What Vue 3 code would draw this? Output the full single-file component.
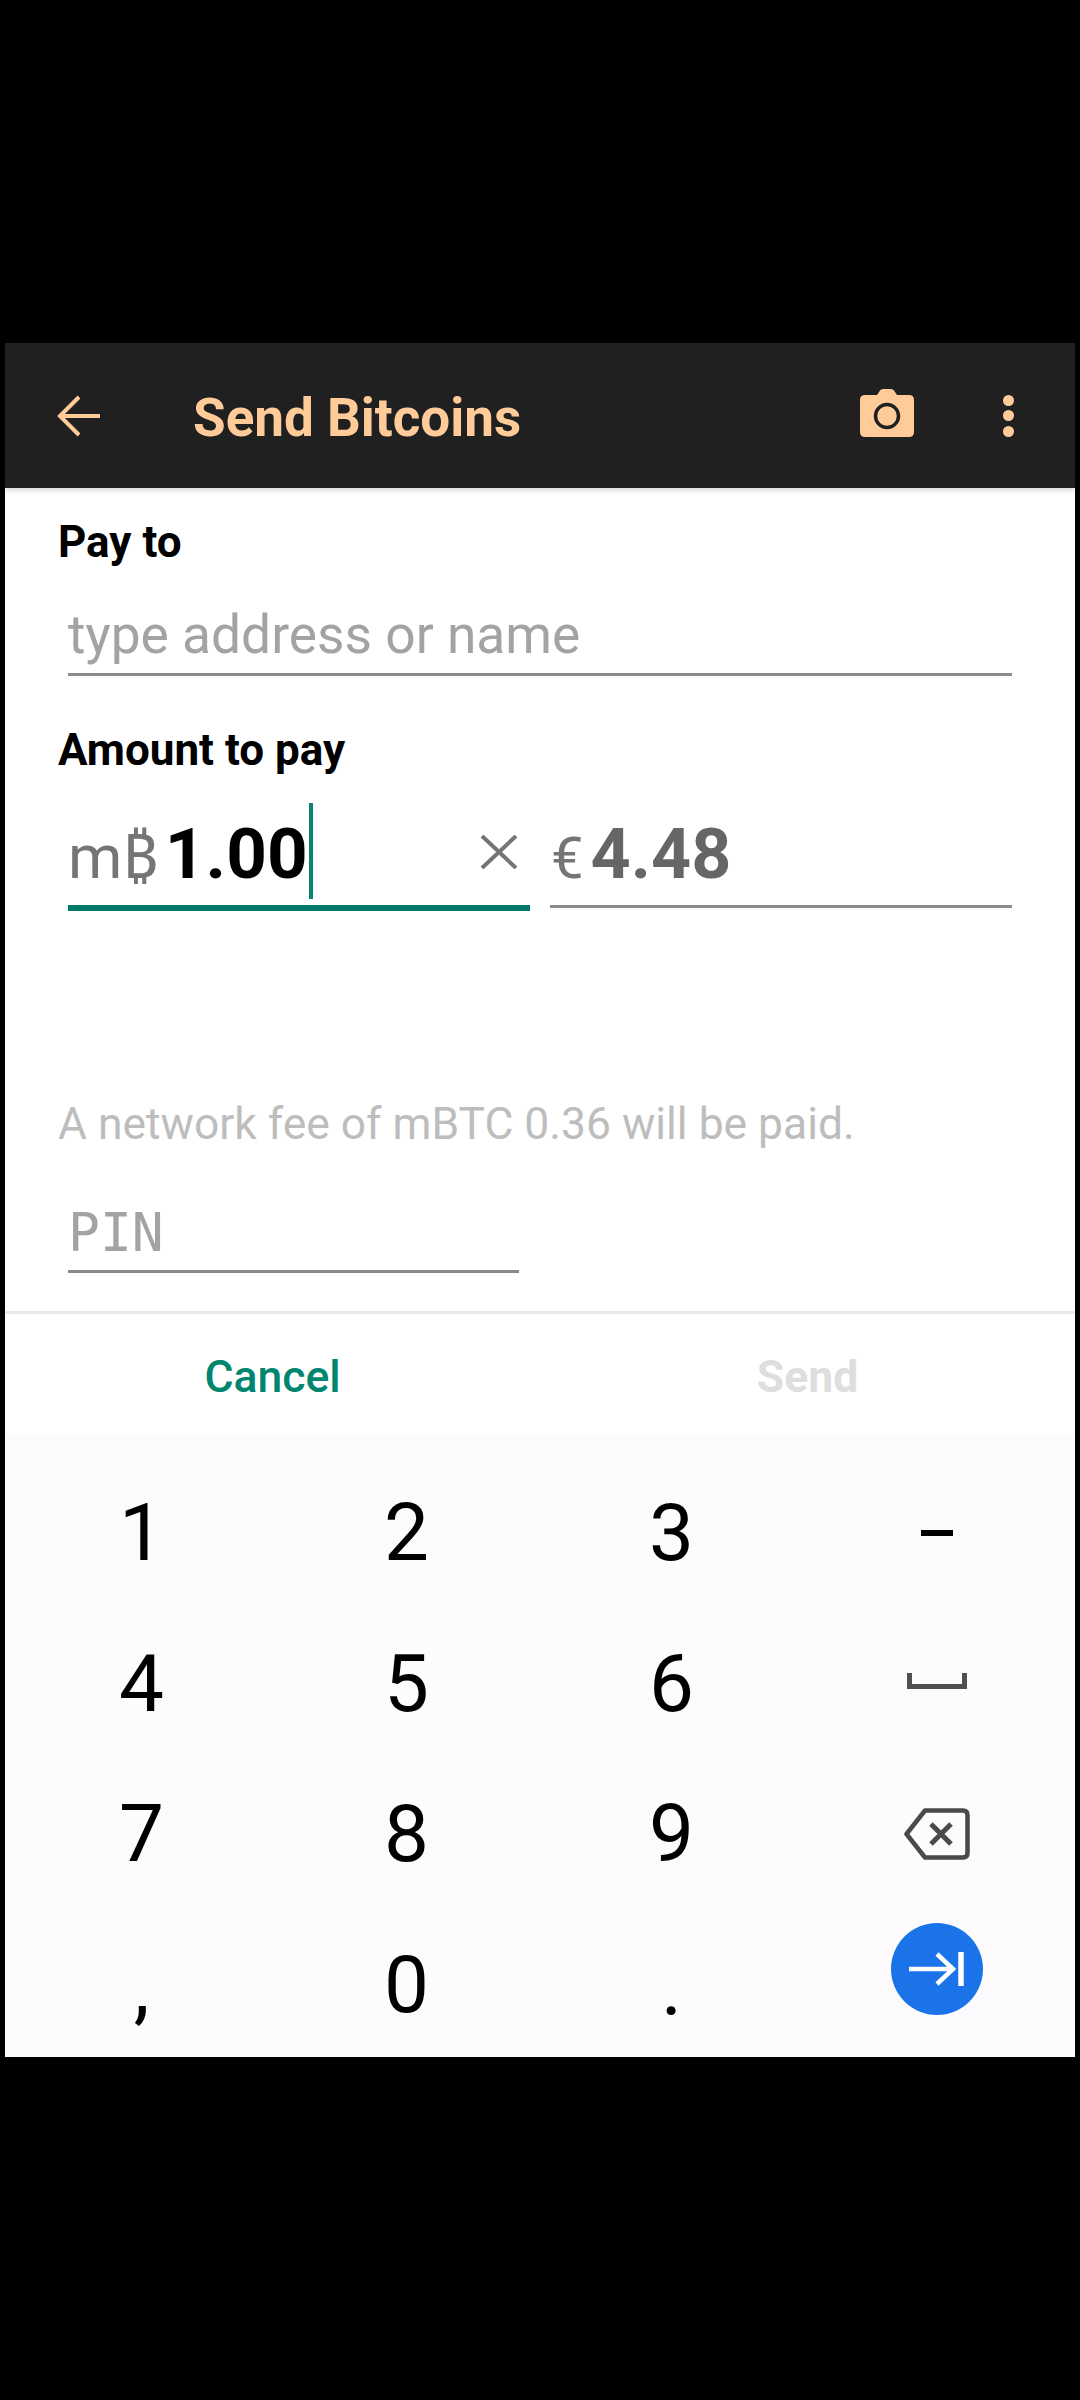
<script setup>
const rows = [
  ['1', '2', '3'],
  ['4', '5', '6'],
  ['7', '8', '9'],
  [',', '0', '.'],
]
</script>

<template>
  <main class="page">
    <section class="screen">
      <header class="bar">
        <svg class="back" viewBox="0 0 44 42" width="44" height="42" aria-label="Back">
          <path d="M43 21H3M22 2 3 21l19 19" fill="none" stroke="#ffcc99" stroke-width="4" />
        </svg>
        <h1 class="title">Send Bitcoins</h1>
        <svg class="camera" viewBox="0 0 54 48" width="54" height="48" aria-label="Scan">
          <path
            d="M17 6 20 1.500Q21 0 23 0H31Q33 0 34 1.500L37 6H49Q54 6 54 11V43Q54 48 49 48H5Q0 48 0 43V11Q0 6 5 6Z"
            fill="#ffcc99"
          />
          <circle cx="27" cy="27" r="11.500" fill="none" stroke="#202020" stroke-width="3.500" />
        </svg>
        <div class="dots" aria-label="More">
          <i></i><i></i><i></i>
        </div>
      </header>

      <div class="form">
        <div class="label">Pay to</div>
        <div class="field address">type address or name</div>

        <div class="label amount-label">Amount to pay</div>
        <div class="amounts">
          <div class="amount focused">
            <span class="unit">m₿</span><span class="value">1.00</span><span class="caret"></span>
            <svg class="clear" viewBox="0 0 38 34" width="38" height="34" aria-label="Clear">
              <path d="M2 1 36 33M36 1 2 33" stroke="#757575" stroke-width="4" fill="none" />
            </svg>
          </div>
          <div class="amount">
            <span class="unit euro">€</span><span class="value muted">4.48</span>
          </div>
        </div>

        <p class="fee">A network fee of mBTC 0.36 will be paid.</p>
        <div class="field pin">PIN</div>
      </div>

      <footer class="actions">
        <button class="action cancel" type="button">Cancel</button>
        <button class="action send" type="button">Send</button>
      </footer>

      <div class="keyboard">
        <template v-for="(row, r) in rows" :key="r">
          <div v-for="key in row" :key="key" class="key" :class="{ punct: key === ',' || key === '.' }">{{ key }}</div>
          <div v-if="r === 0" class="key side">
            <svg viewBox="0 0 32 6" width="32" height="6"><rect width="32" height="6" fill="#000" /></svg>
          </div>
          <div v-else-if="r === 1" class="key side">
            <svg class="space" viewBox="0 0 60 16" width="60" height="16">
              <path d="M2.500 0V13.500H57.500V0" fill="none" stroke="#505050" stroke-width="5" />
            </svg>
          </div>
          <div v-else-if="r === 2" class="key side">
            <svg viewBox="0 0 66 52" width="66" height="52">
              <path
                d="M21 2.500H59Q63.500 2.500 63.500 7V45Q63.500 49.500 59 49.500H21L2.500 26Z"
                fill="none"
                stroke="#4a4a4a"
                stroke-width="4.500"
                stroke-linejoin="round"
              />
              <path d="M27 16 47 36M47 16 27 36" stroke="#4a4a4a" stroke-width="5" fill="none" />
            </svg>
          </div>
          <div v-else class="key side">
            <div class="next">
              <svg viewBox="0 0 56 34" width="56" height="34">
                <path d="M0 17H44M28 2 44 17 28 32" fill="none" stroke="#fff" stroke-width="4.500" />
                <path d="M52 0V34" stroke="#fff" stroke-width="5.500" />
              </svg>
            </div>
          </div>
        </template>
      </div>
    </section>
  </main>
</template>

<style>
html,
body {
  margin: 0;
  background: #000;
}
</style>

<style scoped>
.page {
  width: 1080px;
  height: 2400px;
  padding: 343px 5px 0;
  box-sizing: border-box;
  background: #000;
  font-family: Roboto, "Noto Sans", sans-serif;
}

.screen {
  width: 1070px;
  height: 1714px;
  display: flex;
  flex-direction: column;
  background: #fff;
  overflow: hidden;
}

.bar {
  height: 145px;
  flex: none;
  display: flex;
  align-items: center;
  background: #202020;
  box-shadow: 0 2px 5px rgba(0, 0, 0, 0.18);
  position: relative;
}

.back {
  margin-left: 52px;
  flex: none;
}

.title {
  margin: 0 0 0 92px;
  flex: 1;
  color: #ffcc99;
  font-size: 53px;
  font-weight: 700;
  position: relative;
  top: 2px;
}

.camera {
  flex: none;
  margin: 0 89px 5px 0;
}

.dots {
  display: flex;
  flex-direction: column;
  gap: 4.500px;
  margin-right: 61px;
}

.dots i {
  width: 11px;
  height: 11px;
  border-radius: 50%;
  background: #ffcc99;
}

.form {
  flex: 1;
  padding: 31px 63px 0 53px;
  display: flex;
  flex-direction: column;
  align-items: flex-start;
}

.label {
  color: #000;
  font-size: 44px;
  font-weight: 700;
  line-height: 46px;
}

.field {
  box-sizing: border-box;
  margin-left: 10px;
  border-bottom: 3px solid #8a8a8a;
}

.address {
  width: 944px;
  margin-top: 32px;
  height: 79px;
  padding-top: 9px;
  color: #a3a3a3;
  font-size: 53.300px;
  line-height: 58px;
}

.amount-label {
  margin-top: 51px;
}

.amounts {
  margin: 30px 0 0 10px;
  width: 944px;
  display: flex;
  gap: 20px;
  align-items: flex-start;
}

.amount {
  flex: 1;
  height: 86px;
  position: relative;
  display: flex;
  align-items: baseline;
  padding-top: 16px;
  border-bottom: 3px solid #8a8a8a;
  color: #757575;
  line-height: 70px;
}

.amount.focused {
  border-bottom: 6px solid #00796b;
}

.unit {
  font-size: 62px;
}

.euro {
  margin-left: 1px;
  margin-right: 7px;
  font-size: 58px;
}

.value {
  margin-left: 7px;
  color: #000;
  font-size: 71px;
  font-weight: 700;
}

.muted {
  margin-left: 0;
  color: #666;
  font-size: 70px;
}

.caret {
  width: 4px;
  height: 96px;
  margin-left: 1px;
  align-self: flex-start;
  background: #0a8372;
  position: relative;
  top: -16px;
}

.clear {
  position: absolute;
  right: 12px;
  top: 32px;
}

.fee {
  margin: 188px 0 0;
  color: #bdbdbd;
  font-size: 44.400px;
  line-height: 50px;
}

.pin {
  width: 451px;
  height: 74px;
  margin-top: 50px;
  padding-top: 4px;
  color: #a3a3a3;
  font-family: "DejaVu Sans Mono", "Liberation Mono", monospace;
  font-size: 53px;
  line-height: 60px;
}

.actions {
  flex: none;
  height: 120px;
  display: grid;
  grid-template-columns: 1fr 1fr;
  border-top: 3px solid #e9e7e9;
}

.action {
  border: 0;
  padding: 6px 0 0;
  background: none;
  font-family: inherit;
  font-size: 44.500px;
  font-weight: 500;
}

.cancel {
  color: #00856f;
}

.send {
  color: #dedede;
  font-weight: 700;
}

.keyboard {
  flex: none;
  height: 623px;
  box-sizing: border-box;
  padding: 24px 3px 0 4px;
  display: grid;
  grid-template-columns: repeat(4, 265px);
  grid-auto-rows: 150.500px;
  background: #fdfbfe;
  color: #000;
  font-size: 80px;
}

.key {
  display: flex;
  align-items: center;
  justify-content: center;
}

.punct {
  padding-top: 6px;
}

.space {
  margin-bottom: 6px;
}

.next {
  width: 92px;
  height: 92px;
  display: flex;
  align-items: center;
  justify-content: center;
  border-radius: 50%;
  background: #1a73e8;
  transform: translateY(-16px);
}
</style>
